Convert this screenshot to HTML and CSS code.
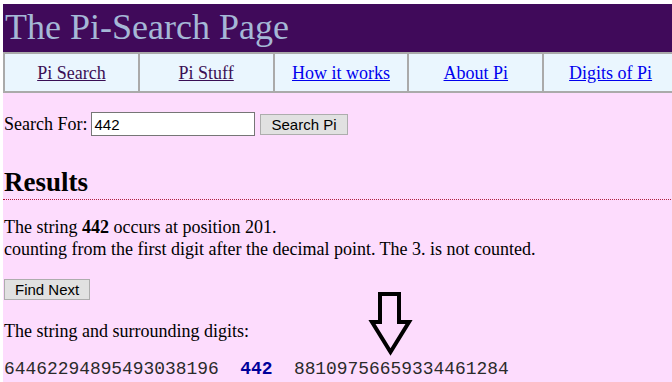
FILE: index.html
```html
<!DOCTYPE html>
<html lang="en">
<head>
    <meta charset="UTF-8">
    <title>The Pi-Search Page</title>
    <link rel="stylesheet" href="styles.css">
</head>
<body>
    <div class="page">
        <!-- header -->
        <h1 class="title">The Pi-Search Page</h1>
        <table class="nav">
            <tr>
                <td><a href="#" class="visited">Pi Search</a></td>
                <td><a href="#" class="visited">Pi Stuff</a></td>
                <td><a href="#">How it works</a></td>
                <td><a href="#">About Pi</a></td>
                <td><a href="#">Digits of Pi</a></td>
            </tr>
        </table>

        <!-- search form -->
        <form class="search" onsubmit="return false;">
            <label for="q">Search For:</label>
            <input id="q" type="text" name="q" value="442">
            <input type="submit" value="Search Pi">
        </form>

        <h2 class="results">Results</h2>
        <p class="found">The string <b>442</b> occurs at position 201.<br>
        counting from the first digit after the decimal point. The 3. is not counted.</p>

        <form class="next" onsubmit="return false;">
            <input type="submit" value="Find Next">
        </form>

        <p class="around">The string and surrounding digits:</p>
        <div class="digits">64462294895493038196  <b>442</b>  88109756659334461284</div>

        <!-- arrow -->
        <svg class="arrow" width="50" height="74" viewBox="0 0 50 74">
            <path d="M14 6 H33 V34 H43 L24.5 64 L6 34 H14 Z" fill="none" stroke="#000" stroke-width="4"/>
        </svg>
    </div>
</body>
</html>
```
FILE: styles.css
```css
html {
    background-color: #ffffff;
    overflow: hidden;
}
body {
    margin: 4px 0 0 3px;
    font-family: "Liberation Serif", "Times New Roman", serif;
    font-size: 18px;
    color: #000;
}
.page {
    position: relative;
    width: 676px;
    background-color: #fddcfd;
    min-height: 378px;
}
.title {
    margin: 0;
    height: 48px;
    padding-left: 2px;
    background-color: #400a5a;
    color: #a5b8d6;
    font-size: 36px;
    font-weight: normal;
    line-height: 46px;
}
.nav {
    width: 100%;
    border-collapse: collapse;
    table-layout: fixed;
    background-color: #eaf6fe;
}
.nav td {
    border: 2px solid #aaaaaa;
    height: 36px;
    padding: 1px 0 0;
    text-align: center;
    font-size: 18px;
}
.nav a {
    color: #0000ee;
}
.nav a.visited {
    color: #3a0f55;
}
.search {
    margin: 0;
    padding: 19px 0 0 1px;
    display: flex;
    align-items: center;
}
.search label {
    margin-right: 4px;
}
.search input[type=text] {
    width: 158px;
    height: 20px;
    padding: 1px 2px;
    margin: 0;
    border: 1px solid #767676;
    font-family: "Liberation Sans", Arial, sans-serif;
    font-size: 15px;
}
input[type=submit] {
    margin: 0 0 0 5px;
    height: 21px;
    padding: 0 10px;
    background-color: #e1e1e1;
    border: 1px solid #adadad;
    border-radius: 0;
    font-family: "Liberation Sans", Arial, sans-serif;
    font-size: 15px;
    color: #000;
}
.results {
    margin: 31px 0 0;
    padding: 0 0 1px 1px;
    font-size: 27px;
    border-bottom: 1px dotted #b02040;
}
.found {
    margin: 16px 0 0 1px;
    line-height: 22px;
}
.next {
    margin: 19px 0 0;
}
.next input[type=submit] {
    margin-left: 1px;
}
.around {
    margin: 21px 0 0 1px;
}
.digits {
    margin: 17px 0 0 1px;
    font-family: "Liberation Mono", "Courier New", monospace;
    font-size: 17.9px;
    color: #2a2a2a;
    white-space: pre;
}
.digits b {
    color: #00009a;
}
.arrow {
    position: absolute;
    left: 363px;
    top: 284px;
}
```
